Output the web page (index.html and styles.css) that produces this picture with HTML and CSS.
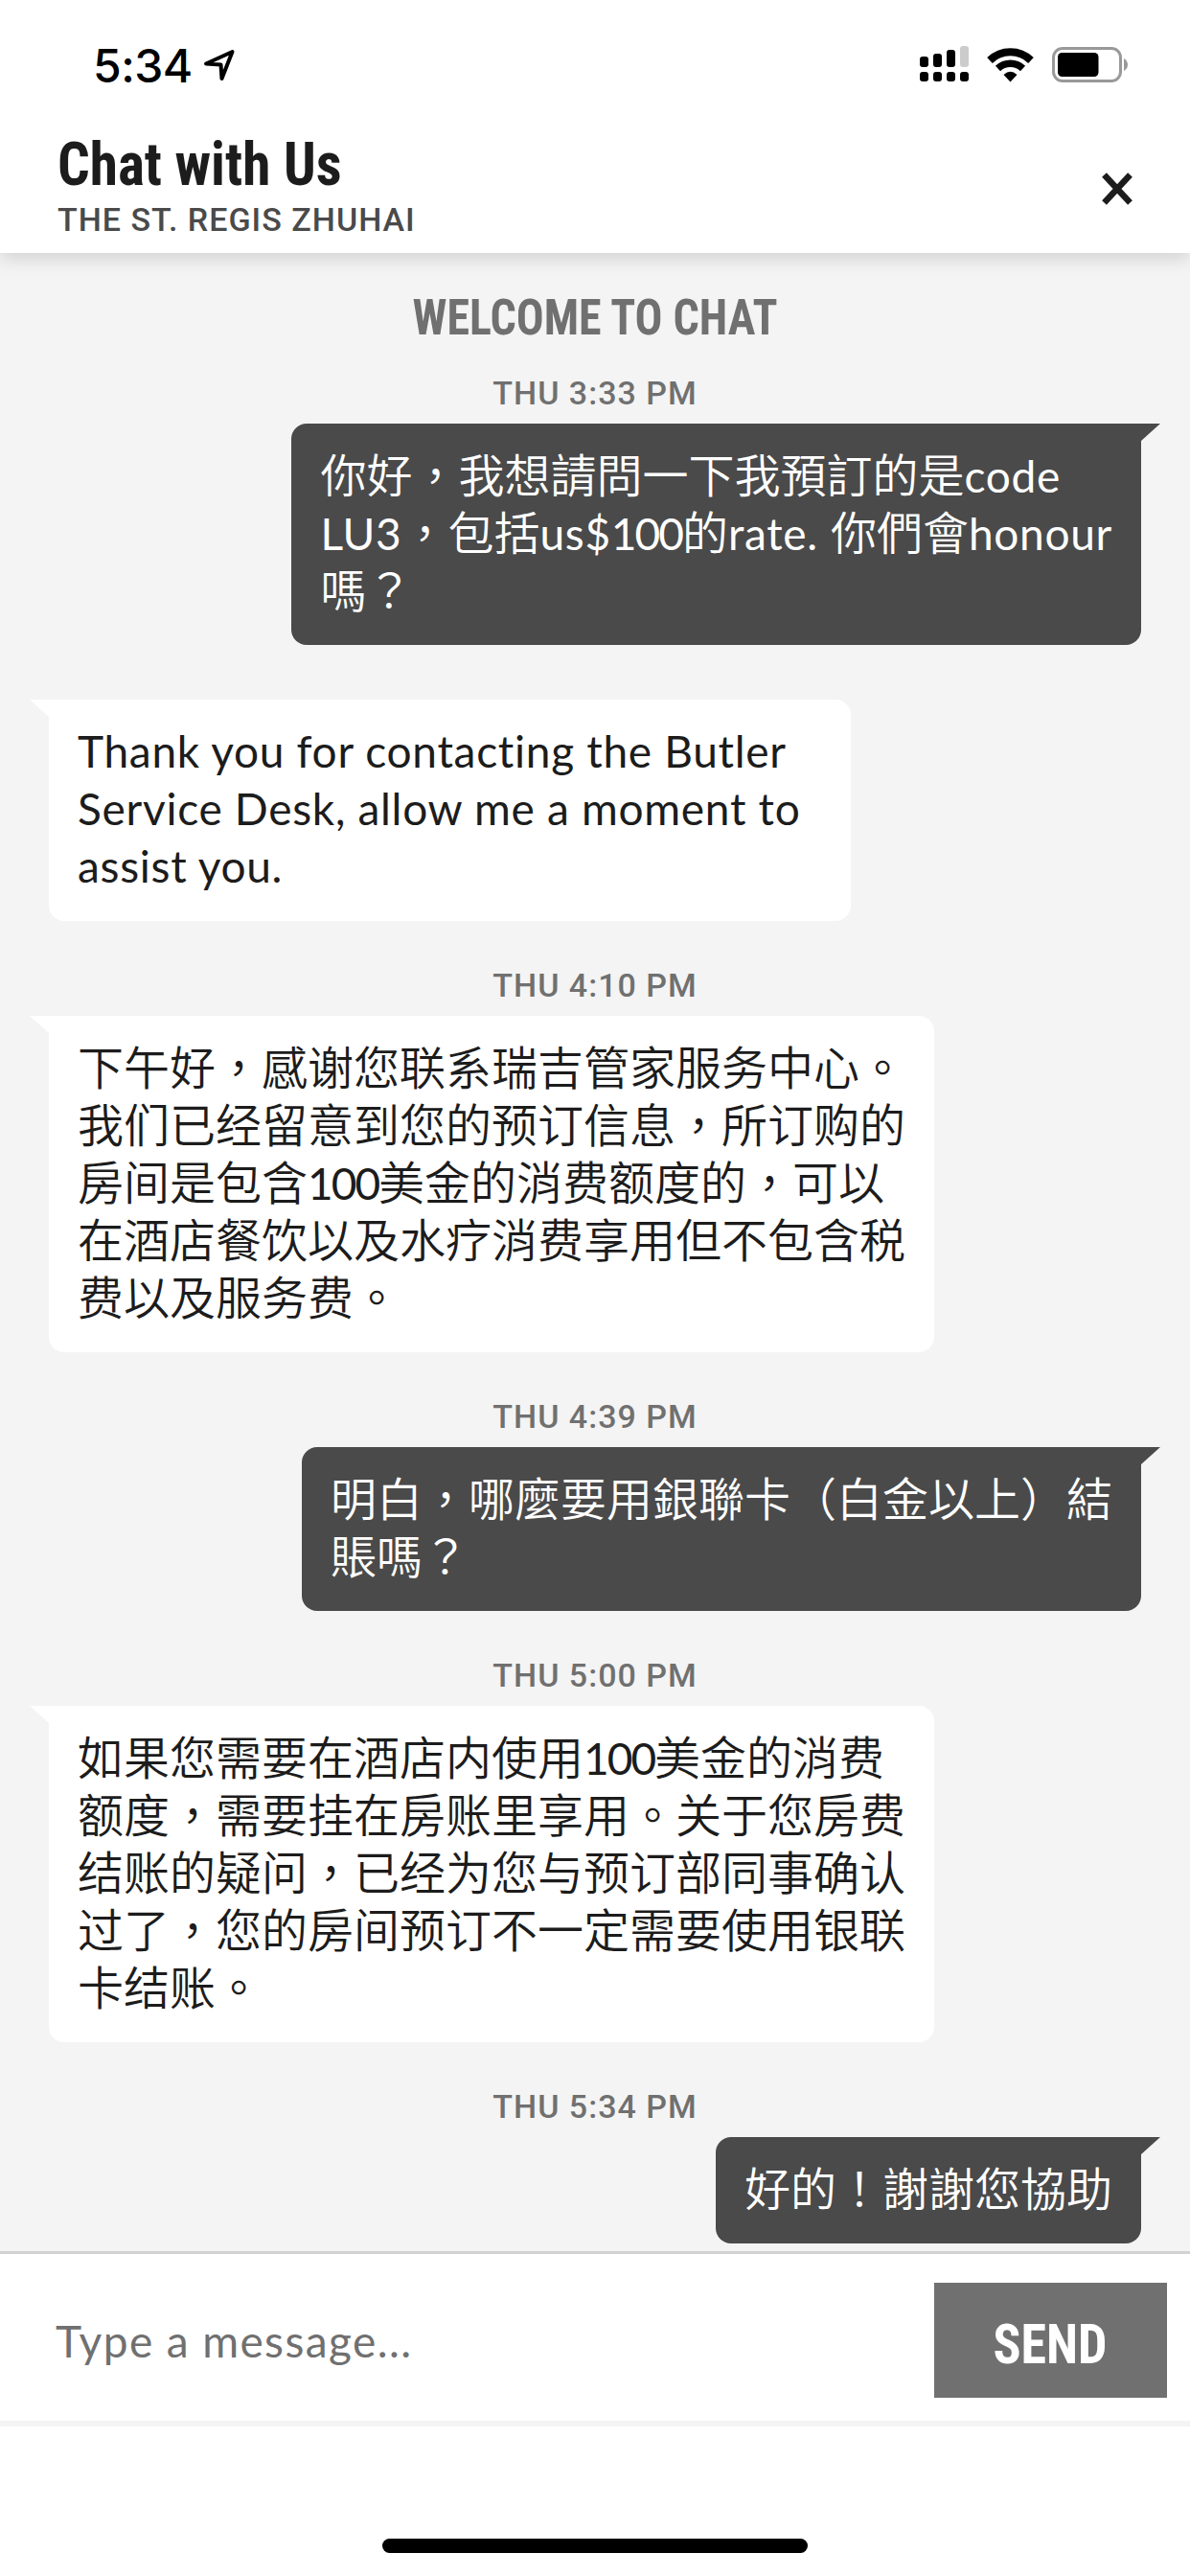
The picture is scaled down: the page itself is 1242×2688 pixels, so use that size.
FILE: index.html
```
<!DOCTYPE html>
<html lang="en">
<head>
  <meta charset="UTF-8" />
  <title>Chat with Us</title>
  <link rel="stylesheet" href="styles.css">
</head>
<body>

<div class="status-bar">
  <div class="clock">
    <span class="time">5:34</span>
    <svg class="location" width="34" height="34" viewBox="0 0 34 34">
      <path d="M3 15.5 L30.5 3 L19.5 31 L18.5 16.5 Z" fill="none" stroke="#000" stroke-width="4" stroke-linejoin="round" />
    </svg>
  </div>
  <div class="status-icons">
    <svg width="51" height="37" viewBox="0 0 51 37">
      <rect x="0" y="11" width="9" height="11" rx="3" />
      <rect x="14" y="8" width="9" height="14" rx="3" />
      <rect x="28" y="4" width="9" height="18" rx="3" />
      <rect x="42" y="0" width="9" height="22" rx="3" fill="#ccc" />
      <rect x="0" y="27" width="9" height="10" rx="3" />
      <rect x="14" y="27" width="9" height="10" rx="3" />
      <rect x="28" y="27" width="9" height="10" rx="3" />
      <rect x="42" y="27" width="9" height="10" rx="3" />
    </svg>
    <svg class="wifi" width="49" height="37" viewBox="0 0 49 37">
      <path d="M3 14 A31 31 0 0 1 46 14" fill="none" stroke="#000" stroke-width="8" />
      <path d="M11.5 22.5 A19 19 0 0 1 37.5 22.5" fill="none" stroke="#000" stroke-width="7.5" />
      <path d="M24.5 36.5 L17.5 29 Q24.5 22.5 31.5 29 Z" />
    </svg>
    <svg class="battery" width="80" height="37" viewBox="0 0 80 37">
      <rect x="1.5" y="1.5" width="70" height="34" rx="9.5" fill="none" stroke="#999" stroke-width="3" />
      <rect x="6" y="6" width="42.5" height="25" rx="4.5" />
      <path d="M75 12 Q79 14.5 79 18.5 Q79 22.5 75 25 Z" fill="#999" />
    </svg>
  </div>
</div>

<header class="chat-header">
  <div>
    <h1>Chat with Us</h1>
    <p class="property">THE ST. REGIS ZHUHAI</p>
  </div>
  <svg class="close" width="34" height="34" viewBox="0 0 34 34">
    <path d="M3.5 2.5 L30.5 31.5 M30.5 2.5 L3.5 31.5" stroke="#1c1c1c" stroke-width="6.5" />
  </svg>
</header>

<main class="chat" lang="zh-TW">
  <h2>WELCOME TO CHAT</h2>

  <div class="timestamp">THU 3:33 PM</div>
  <div class="bubble sent">你好，我想請問一下我預訂的是<span class="latin">code</span><br><span class="latin">LU3</span>，包括<span class="latin">us$<span class="digits">100</span></span>的<span class="latin">rate.</span> 你們會<span class="latin">honour</span><br>嗎？</div>

  <div class="bubble received english">Thank you for contacting the Butler<br>Service Desk, allow me a moment to<br>assist you.</div>

  <div class="timestamp">THU 4:10 PM</div>
  <div class="bubble received">下午好，感谢您联系瑞吉管家服务中心。<br>我们已经留意到您的预订信息，所订购的<br>房间是包含<span class="latin digits">100</span>美金的消费额度的，可以<br>在酒店餐饮以及水疗消费享用但不包含税<br>费以及服务费。</div>

  <div class="timestamp">THU 4:39 PM</div>
  <div class="bubble sent">明白，哪麼要用銀聯卡（白金以上）結<br>賬嗎？</div>

  <div class="timestamp">THU 5:00 PM</div>
  <div class="bubble received">如果您需要在酒店内使用<span class="latin digits">100</span>美金的消费<br>额度，需要挂在房账里享用。关于您房费<br>结账的疑问，已经为您与预订部同事确认<br>过了，您的房间预订不一定需要使用银联<br>卡结账。</div>

  <div class="timestamp">THU 5:34 PM</div>
  <div class="bubble sent">好的！謝謝您協助</div>
</main>

<form class="composer">
  <input type="text" placeholder="Type a message..." />
  <button type="button"><span>SEND</span></button>
</form>

<div class="home-area">
  <div class="home-indicator"></div>
</div>

</body>
</html>
```
FILE: styles.css
```
* {
  box-sizing: border-box;
}

body {
  margin: 0;
  height: 2688px;
  display: flex;
  flex-direction: column;
  overflow: hidden;
  background: #fff;
  color: #1c1c1c;
  font-family: Roboto, "Noto Sans CJK TC", sans-serif;
}

h1, h2, p {
  margin: 0;
}

svg {
  display: block;
}

.status-bar {
  flex-shrink: 0;
  height: 134px;
  padding: 48px 64px 0 97px;
  display: flex;
  justify-content: space-between;
  align-items: flex-start;
}

.clock {
  display: flex;
  gap: 11px;
}

.time {
  font-family: Inter, sans-serif;
  font-size: 48px;
  font-weight: 550;
  line-height: 42px;
  letter-spacing: -0.5px;
  color: #000;
}

.location {
  margin-top: 3px;
}

.status-icons {
  display: flex;
}

.wifi {
  margin: 1px 0 0 19px;
}

.battery {
  margin: 1px 0 0 19px;
}

.chat-header {
  position: relative;
  flex-shrink: 0;
  height: 130px;
  padding: 1px 59px 0 60px;
  display: flex;
  justify-content: space-between;
  background: #fff;
  box-shadow: 0 6px 18px rgba(0, 0, 0, 0.14);
  clip-path: inset(0 0 -30px 0);
}

.chat-header h1 {
  font: bold 63px/74px "Roboto Condensed", sans-serif;
  transform: scaleX(0.94);
  transform-origin: left;
}

.property {
  font-size: 34px;
  font-weight: 500;
  line-height: 40px;
  letter-spacing: 1px;
  color: #4a4a4a;
}

.close {
  margin-top: 45px;
}

.chat {
  flex: 1;
  min-height: 0;
  padding: 38px 51px 0;
  display: flex;
  flex-direction: column;
  overflow: hidden;
  background: #f4f4f4;
}

.chat > * {
  flex-shrink: 0;
}

.chat h2 {
  height: 87px;
  text-align: center;
  font: bold 51px/60px "Roboto Condensed", sans-serif;
  transform: scaleX(0.94);
  color: #707070;
}

.timestamp {
  height: 42px;
  text-align: center;
  font-size: 34px;
  font-weight: 500;
  line-height: 42px;
  letter-spacing: 1px;
  color: #707070;
  margin-bottom: 11px;
}

.bubble {
  position: relative;
  margin-bottom: 46px;
  padding: 24px 30px 27px;
  border-radius: 16px;
  font-family: Lato, "Noto Sans CJK TC", sans-serif;
  font-size: 48px;
  font-weight: 350;
  line-height: 60px;
  white-space: nowrap;
}

.sent {
  align-self: flex-end;
  border-top-right-radius: 0;
  background: #4a4a4a;
  color: #fff;
}

.received {
  align-self: flex-start;
  border-top-left-radius: 0;
  background: #fff;
}

.sent::after,
.received::before {
  content: "";
  position: absolute;
  top: 0;
  width: 20px;
  height: 18px;
}

.sent::after {
  left: 100%;
  background: #4a4a4a;
  clip-path: polygon(0 0, 100% 0, 0 100%);
}

.received::before {
  right: 100%;
  background: #fff;
  clip-path: polygon(0 0, 100% 0, 100% 100%);
}

.latin,
.english {
  font-size: 46px;
  font-weight: 400;
  letter-spacing: 0.7px;
}

.latin {
  line-height: 1;
}

.digits {
  letter-spacing: -2px;
}

.english {
  width: 837px;
  margin-top: 11px;
}

.composer {
  flex-shrink: 0;
  height: 177px;
  padding: 30px 24px 24px 58px;
  display: flex;
  align-items: flex-start;
  border-top: 3px solid #d2d2d2;
}

.composer input {
  flex: 1;
  height: 120px;
  padding: 0;
  border: 0;
  background: none;
  font: 46px Lato, sans-serif;
  letter-spacing: 1.4px;
}

.composer input::placeholder {
  color: #707070;
  opacity: 1;
}

.composer button {
  width: 243px;
  height: 120px;
  padding: 8px 0 0;
  border: 0;
  background: #707070;
  color: #fff;
  font: bold 58px "Roboto Condensed", sans-serif;
}

.composer button span {
  display: inline-block;
  transform: scaleX(0.93);
}

.home-area {
  flex-shrink: 0;
  height: 162px;
  padding-bottom: 24px;
  border-top: 6px solid #f4f4f4;
  display: flex;
  justify-content: center;
  align-items: flex-end;
}

.home-indicator {
  width: 444px;
  height: 15px;
  border-radius: 8px;
  background: #000;
}
```
